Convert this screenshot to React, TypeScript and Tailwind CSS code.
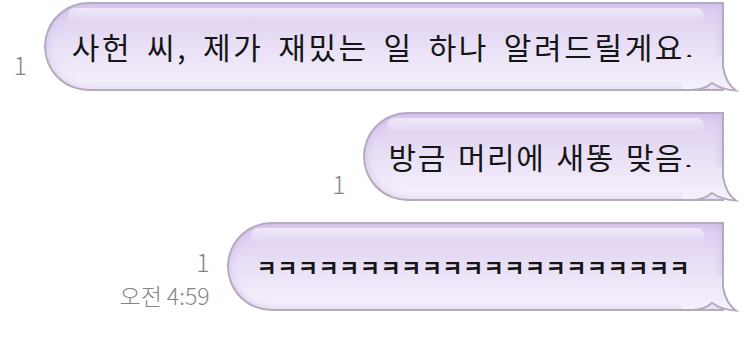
import React from 'react';

const FONT = '"Noto Sans CJK KR", "Noto Sans", sans-serif';

const Tail: React.FC = () => (
  <svg
    className="absolute right-[-16px] bottom-[-2px] overflow-visible"
    width="56"
    height="34"
    viewBox="0 0 56 34"
  >
    <defs>
      <linearGradient id="tailFill" x1="0" y1="0" x2="0" y2="1">
        <stop offset="0" stopColor="#ece4f7" />
        <stop offset="1" stopColor="#f6f2fc" />
      </linearGradient>
    </defs>
    <path d="M0,33 L10,33 Q22,33 30,26 Q40,33 54,33.5 Q44,27 41,10 L41,0 L0,0 Z" fill="url(#tailFill)" />
    <path
      d="M0,33 L10,33 Q22,33 30,26 Q40,33 54,33.5 Q44,27 41,10 L41,0"
      fill="none"
      stroke="#b5aabf"
      strokeWidth="2"
    />
  </svg>
);

type RowProps = {
  text: string;
  meta: string[];
  metaMb: string;
  textClass: string;
  pl: string;
  pr: string;
};

const Row: React.FC<RowProps> = ({ text, meta, metaMb, textClass, pl, pr }) => (
  <div className="flex items-end">
    <div className={`flex flex-col items-end mr-[17px] text-[#858585] leading-none gap-[10px] ${metaMb}`}>
      {meta.map((m) =>
        m === '1' ? (
          <span key={m} className="text-[25px] font-light">1</span>
        ) : (
          <span key={m} className="text-[23px] font-light">{m}</span>
        )
      )}
    </div>
    <div
      className={`relative h-[89px] flex items-center rounded-l-full rounded-tr-[34px] rounded-br-[6px] border-2 border-[#b5aabf] bg-gradient-to-b from-[#dbcbf0] via-[#e9e0f6] to-[#f6f2fc] shadow-[inset_0_0_8px_rgba(190,165,225,0.55)] ${pl} ${pr}`}
    >
      <div className="absolute top-[4px] left-[22px] right-[18px] h-[15px] rounded-full bg-gradient-to-b from-white/60 to-white/0" />
      <span className={`relative text-[#151515] whitespace-nowrap ${textClass}`}>{text}</span>
      <Tail />
    </div>
  </div>
);

export default function App() {
  return (
    <div className="w-[746px] h-[351px] bg-white overflow-hidden flex flex-col items-end pt-[2px] pr-[22px] gap-[21px]" style={{ fontFamily: FONT }}>
      <Row
        text="사헌 씨, 제가 재밌는 일 하나 알려드릴게요."
        meta={['1']}
        metaMb="mb-[14px]"
        textClass="text-[30px] tracking-[2.6px] [word-spacing:5.5px]"
        pl="pl-[26px]"
        pr="pr-[26px]"
      />
      <Row
        text="방금 머리에 새똥 맞음."
        meta={['1']}
        metaMb="mb-[5px]"
        textClass="text-[30px] tracking-[1.5px] [word-spacing:3px]"
        pl="pl-[24px]"
        pr="pr-[28px]"
      />
      <Row
        text="ㅋㅋㅋㅋㅋㅋㅋㅋㅋㅋㅋㅋㅋㅋㅋㅋㅋㅋㅋㅋㅋ"
        meta={['1', '오전 4:59']}
        metaMb="mb-[4px]"
        textClass="text-[22px] font-bold tracking-[0.4px]"
        pl="pl-[28px]"
        pr="pr-[32px]"
      />
    </div>
  );
}
